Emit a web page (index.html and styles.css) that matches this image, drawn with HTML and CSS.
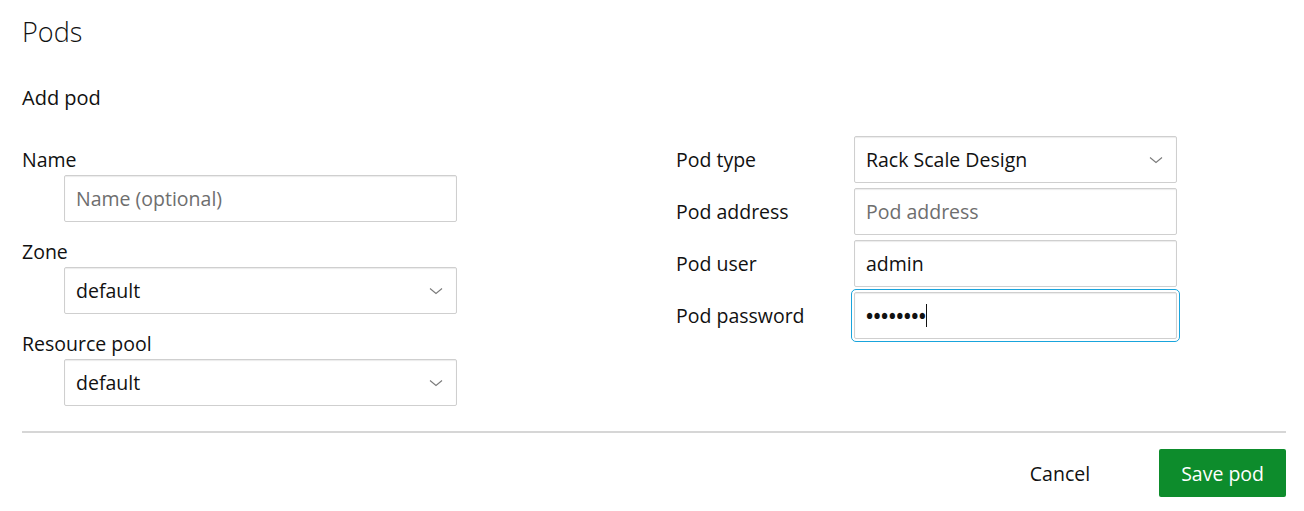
FILE: index.html
```html
<!DOCTYPE html>
<html lang="en">
<head>
<meta charset="utf-8">
<title>Pods</title>
<link rel="stylesheet" href="styles.css">
</head>
<body>
<main class="page">
  <h1 class="page-title">Pods</h1>
  <h2 class="section-title">Add pod</h2>
  <form class="pod-form">
    <div class="form-grid">
      <div class="col-left">
        <div class="field">
          <label class="field-label" for="name">Name</label>
          <input class="input" id="name" type="text" placeholder="Name (optional)">
        </div>
        <div class="field">
          <label class="field-label" for="zone">Zone</label>
          <div class="select"><span>default</span><svg class="chevron" viewBox="0 0 14 8" width="14" height="8"><path d="M1 1.5 L7 6.5 L13 1.5" fill="none" stroke="#7a7a7a" stroke-width="1.1"/></svg></div>
        </div>
        <div class="field">
          <label class="field-label" for="pool">Resource pool</label>
          <div class="select"><span>default</span><svg class="chevron" viewBox="0 0 14 8" width="14" height="8"><path d="M1 1.5 L7 6.5 L13 1.5" fill="none" stroke="#7a7a7a" stroke-width="1.1"/></svg></div>
        </div>
      </div>
      <div class="col-right">
        <div class="row">
          <span class="row-label">Pod type</span>
          <div class="select"><span>Rack Scale Design</span><svg class="chevron" viewBox="0 0 14 8" width="14" height="8"><path d="M1 1.5 L7 6.5 L13 1.5" fill="none" stroke="#7a7a7a" stroke-width="1.1"/></svg></div>
        </div>
        <div class="row">
          <label class="row-label" for="addr">Pod address</label>
          <input class="input" id="addr" type="text" placeholder="Pod address">
        </div>
        <div class="row">
          <label class="row-label" for="user">Pod user</label>
          <input class="input" id="user" type="text" value="admin">
        </div>
        <div class="row">
          <span class="row-label">Pod password</span>
          <div class="input input--focus"><span class="dots">••••••••</span><span class="caret"></span></div>
        </div>
      </div>
    </div>
    <hr class="divider">
    <div class="actions">
      <button type="button" class="btn btn--base">Cancel</button>
      <button type="button" class="btn btn--positive">Save pod</button>
    </div>
  </form>
</main>
</body>
</html>
```
FILE: styles.css
```css
* { box-sizing: border-box; }
html, body { margin: 0; padding: 0; background: #fff; }
body {
  font-family: "Open Sans", "Noto Sans", sans-serif;
  font-size: 19.5px;
  color: #111;
}
.page { padding: 0 18px 0 22px; }
.page-title {
  margin: 0;
  padding-top: 12px;
  font-size: 27px;
  line-height: 40px;
  font-weight: 300;
}
.section-title {
  margin: 0;
  padding-top: 33px;
  font-size: 20px;
  line-height: 26px;
  font-weight: 400;
}
.form-grid {
  display: grid;
  grid-template-columns: 612px 612px;
  column-gap: 40px;
  margin-top: 25px;
}
.field { display: flex; flex-direction: column; margin-bottom: 6px; }
.field-label {
  padding-top: 12px;
  line-height: 24px;
  margin-bottom: 3px;
}
.field .input, .field .select { margin-left: 42px; width: 393px; }
.input, .select {
  height: 47px;
  border: 1px solid #cfcfcf;
  border-radius: 2px;
  box-shadow: inset 0 1px 1px rgba(0,0,0,0.08);
  background: #fff;
  font: inherit;
  color: #111;
  padding: 0 11px;
  display: flex;
  align-items: center;
}
.input::placeholder { color: #6e6e6e; }
.select { justify-content: space-between; padding-right: 13px; }
.chevron { display: block; }
.col-right { display: flex; flex-direction: column; gap: 5px; }
.row { display: flex; align-items: center; }
.row-label { width: 180px; padding-left: 2px; }
.row .input, .row .select { width: 323px; }
.input--focus {
  outline: 1px solid #19a4dc;
  outline-offset: 2px;
}
.dots { font-size: 19px; letter-spacing: 0.4px; font-weight: 700; }
.caret {
  display: inline-block;
  width: 1px;
  height: 23px;
  background: #111;
  margin-left: 0;
}
.divider {
  border: 0;
  border-top: 2px solid #d6d6d6;
  margin: 19px 0 0 0;
}
.actions {
  display: flex;
  justify-content: flex-end;
  align-items: center;
  gap: 47px;
  margin-top: 16px;
}
.btn {
  font: inherit;
  height: 48px;
  padding: 0 22px;
  border-radius: 2px;
  border: 0;
  cursor: pointer;
}
.btn--base { background: transparent; color: #111; }
.btn--positive { background: #0d8c2c; color: #fff; }
```
